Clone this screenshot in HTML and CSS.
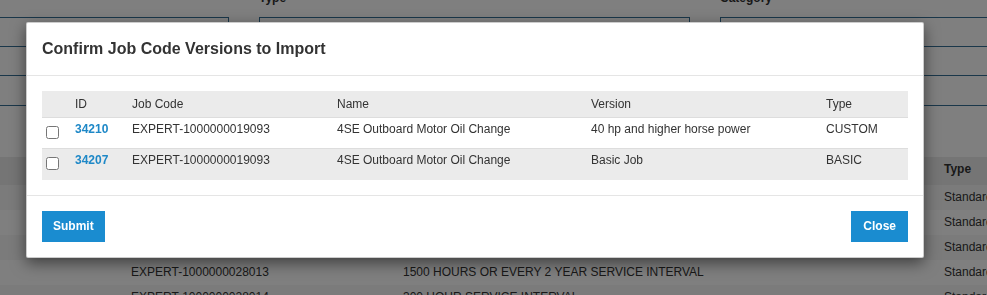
FILE: index.html
```html
<!DOCTYPE html>
<html>
<head>
<meta charset="utf-8">
<link rel="stylesheet" href="styles.css">
</head>
<body>
<div class="page">
  <div class="filters">
    <div class="field"><label class="lbl">&nbsp;</label><div class="box"></div><div class="box"></div><div class="box"></div></div>
    <div class="field"><label class="lbl">Type</label><div class="box"></div><div class="box"></div><div class="box"></div></div>
    <div class="field"><label class="lbl">Category</label><div class="box"></div><div class="box"></div><div class="box"></div></div>
  </div>
  <table class="list">
    <colgroup><col class="c1"><col class="c2"><col class="c3"><col class="c4"><col class="c5"></colgroup>
    <thead><tr><th></th><th>Job Code</th><th>Name</th><th>Type</th><th>Status</th></tr></thead>
    <tbody>
      <tr><td></td><td>EXPERT-1000000028010</td><td>100 HOUR SERVICE INTERVAL</td><td>Standard</td><td>Active</td></tr>
      <tr><td></td><td>EXPERT-1000000028011</td><td>500 HOUR SERVICE INTERVAL</td><td>Standard</td><td>Active</td></tr>
      <tr><td></td><td>EXPERT-1000000028012</td><td>1000 HOUR SERVICE INTERVAL</td><td>Standard</td><td>Active</td></tr>
      <tr><td></td><td>EXPERT-1000000028013</td><td>1500 HOURS OR EVERY 2 YEAR SERVICE INTERVAL</td><td>Standard</td><td>Active</td></tr>
      <tr><td></td><td>EXPERT-1000000028014</td><td>300 HOUR SERVICE INTERVAL</td><td>Standard</td><td>Active</td></tr>
    </tbody>
  </table>
</div>
<div class="backdrop"></div>
<div class="modal">
  <div class="modal-header"><h4 class="modal-title">Confirm Job Code Versions to Import</h4></div>
  <div class="modal-body">
    <table class="versions">
      <colgroup><col class="v-check"><col class="v-id"><col class="v-code"><col class="v-name"><col class="v-ver"><col class="v-type"></colgroup>
      <thead>
        <tr><th></th><th>ID</th><th>Job Code</th><th>Name</th><th>Version</th><th>Type</th></tr>
      </thead>
      <tbody>
        <tr><td><input type="checkbox" class="chk"></td><td><a class="idlink">34210</a></td><td>EXPERT-1000000019093</td><td>4SE Outboard Motor Oil Change</td><td>40 hp and higher horse power</td><td>CUSTOM</td></tr>
        <tr class="alt"><td><input type="checkbox" class="chk"></td><td><a class="idlink">34207</a></td><td>EXPERT-1000000019093</td><td>4SE Outboard Motor Oil Change</td><td>Basic Job</td><td>BASIC</td></tr>
      </tbody>
    </table>
  </div>
  <div class="modal-footer">
    <button class="btn btn-submit">Submit</button>
    <button class="btn">Close</button>
  </div>
</div>
</body>
</html>
```
FILE: styles.css
```css
html, body {
  margin: 0;
  padding: 0;
  background: #fff;
  overflow: hidden;
  font-family: "Liberation Sans", Arial, sans-serif;
  font-size: 12px;
  color: #333;
}
.page {
  width: 1200px;
}
.filters {
  display: grid;
  grid-template-columns: 249px 431px 400px;
  column-gap: 30px;
  margin-top: -10px;
  margin-left: -20px;
}
.field {
  display: flex;
  flex-direction: column;
}
.lbl {
  font-weight: bold;
  line-height: 17px;
  height: 27px;
}
.box {
  border: 1px solid #346f95;
  height: 28px;
  margin-top: -1px;
}
.box:first-of-type { margin-top: 0; }
.box:last-child { height: 29px; }
.list {
  margin-top: 51px;
  border-collapse: collapse;
  width: 1200px;
  table-layout: fixed;
}
.list .c1 { width: 123px; }
.list .c2 { width: 272px; }
.list .c3 { width: 541px; }
.list .c4 { width: 150px; }
.list tr { height: 25px; }
.list thead tr { height: 28px; }
.list th, .list td {
  text-align: left;
  padding: 0 8px;
  line-height: 17px;
  white-space: nowrap;
  overflow: hidden;
}
.list th {
  font-weight: bold;
  background: #ebebeb;
  vertical-align: top;
  padding-top: 4px;
}
.list tbody tr:nth-child(odd) td { background: #f7f7f7; }
.list tbody tr:nth-child(even) td { background: #ffffff; }
.backdrop {
  position: fixed;
  inset: 0;
  background: rgba(0, 0, 0, 0.5);
}
.modal {
  position: fixed;
  top: 22px;
  left: 26px;
  width: 898px;
  box-sizing: border-box;
  background: #fff;
  border: 1px solid rgba(0, 0, 0, 0.2);
  border-radius: 2px;
  box-shadow: 0 5px 15px rgba(0, 0, 0, 0.5);
}
.modal-header {
  padding: 15px;
  border-bottom: 1px solid #e5e5e5;
}
.modal-title {
  margin: 0;
  font-size: 16px;
  line-height: 22px;
  font-weight: bold;
  color: #333;
}
.modal-body {
  padding: 15px;
}
.versions {
  width: 100%;
  border-collapse: collapse;
  table-layout: fixed;
}
.v-check { width: 33px; }
.v-id { width: 57px; }
.v-code { width: 205px; }
.v-name { width: 254px; }
.v-ver { width: 235px; }
.versions thead tr { height: 26px; }
.versions tbody tr { height: 31px; }
.versions th {
  background: #ebebeb;
  font-weight: normal;
  text-align: left;
  color: #333;
  padding: 5px 0 4px;
  line-height: 17px;
}
.versions td {
  vertical-align: top;
  padding: 3px 0 0;
  line-height: 17px;
  border-top: 1px solid #dddddd;
  color: #333;
}
.versions tr.alt td { background: #ebebeb; }
.chk {
  margin: 5px 0 0 4px;
  width: 13px;
  height: 13px;
}
.idlink {
  color: #1e88c7;
  font-weight: bold;
  text-decoration: none;
}
.modal-footer {
  border-top: 1px solid #e5e5e5;
  padding: 15px;
  display: flex;
  justify-content: space-between;
}
.btn {
  background: #1a8cd0;
  color: #fff;
  border: 0;
  border-radius: 0;
  font-family: "Liberation Sans", Arial, sans-serif;
  font-size: 12px;
  font-weight: bold;
  line-height: 17px;
  padding: 7px 12px;
}
.btn-submit {
  padding-left: 11px;
  padding-right: 11px;
}
```
